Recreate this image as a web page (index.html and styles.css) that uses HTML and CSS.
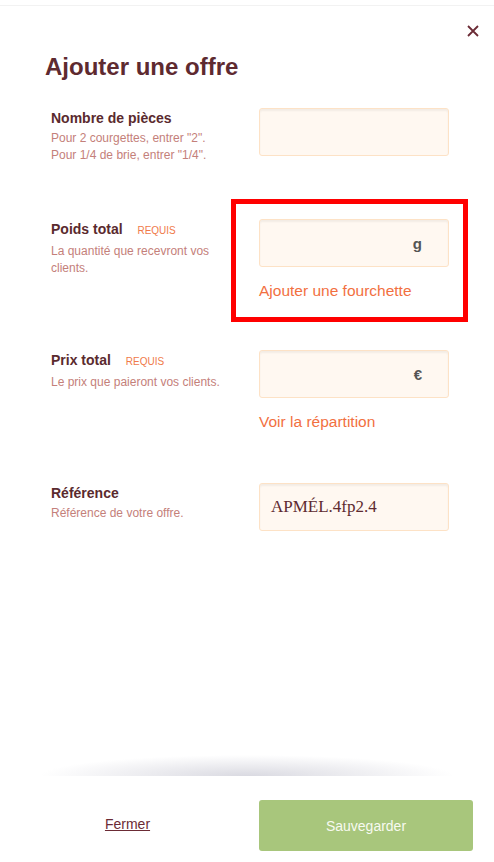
FILE: index.html
```html
<!DOCTYPE html>
<html lang="fr">
<head>
    <meta charset="UTF-8">
    <title>Ajouter une offre</title>
    <link rel="stylesheet" href="styles.css">
</head>
<body>

<div class="modal">
    <div class="content">
        <div class="topbar">
            <button class="close-btn" aria-label="Fermer">
                <svg width="12" height="12" viewBox="0 0 12 12">
                    <path d="M1 1 L11 11 M11 1 L1 11" stroke="#6b2b35" stroke-width="1.8" fill="none"/>
                </svg>
            </button>
        </div>

        <h1>Ajouter une offre</h1>

        <div class="field">
            <div class="field-info">
                <label>Nombre de pièces</label>
                <p class="help">Pour 2 courgettes, entrer "2".<br>Pour 1/4 de brie, entrer "1/4".</p>
            </div>
            <div class="field-input">
                <div class="input"></div>
            </div>
        </div>

        <div class="field">
            <div class="field-info">
                <label>Poids total <span class="required">REQUIS</span></label>
                <p class="help">La quantité que recevront vos clients.</p>
            </div>
            <div class="field-input">
                <div class="input"><span class="unit">g</span></div>
                <a class="link">Ajouter une fourchette</a>
                <div class="highlight"></div>
            </div>
        </div>

        <div class="field">
            <div class="field-info">
                <label>Prix total <span class="required">REQUIS</span></label>
                <p class="help">Le prix que paieront vos clients.</p>
            </div>
            <div class="field-input">
                <div class="input"><span class="unit">€</span></div>
                <a class="link">Voir la répartition</a>
            </div>
        </div>

        <div class="field">
            <div class="field-info">
                <label>Référence</label>
                <p class="help">Référence de votre offre.</p>
            </div>
            <div class="field-input">
                <div class="input ref">APMÉL.4fp2.4</div>
            </div>
        </div>
    </div>

    <div class="shade"></div>

    <div class="footer">
        <div class="footer-left"><a class="close-link">Fermer</a></div>
        <button class="save-btn">Sauvegarder</button>
    </div>
</div>

</body>
</html>
```

FILE: styles.css
```css
body {
    margin: 0;
    font-family: "Liberation Sans", Arial, sans-serif;
    background-color: white;
}

.modal {
    height: 862px;
    display: flex;
    flex-direction: column;
}

.content {
    flex: 1;
}

.topbar {
    margin-top: 5px;
    border-top: 1px solid #f2f2f2;
    display: flex;
    justify-content: flex-end;
    padding: 19px 15px 0;
}

.close-btn {
    background: transparent;
    border: none;
    padding: 0;
    width: 12px;
    height: 12px;
    display: block;
    cursor: pointer;
}

.close-btn svg {
    display: block;
}

h1 {
    margin: 16px 0 27px 45px;
    font-size: 24px;
    line-height: 28px;
    color: #5e2a30;
}

.field {
    display: grid;
    grid-template-columns: 208px 190px;
    padding-left: 51px;
    margin-bottom: 49px;
}

.field:last-child {
    padding-top: 2px;
}

.field-info label {
    display: block;
    font-size: 14px;
    line-height: 20px;
    font-weight: bold;
    color: #5a2a2e;
}

.required {
    font-size: 10px;
    font-weight: normal;
    color: #f07a4a;
    margin-left: 11px;
}

.help {
    margin: 2px 0 6px;
    font-size: 12px;
    line-height: 17px;
    color: #c4807a;
    padding-right: 20px;
}

.field-input {
    position: relative;
}

.input {
    height: 46px;
    border: 1px solid #fde2c6;
    border-radius: 3px;
    background-color: #fff8f1;
    box-shadow: inset 0 2px 2px rgba(0,0,0,0.05);
    display: flex;
    align-items: center;
    justify-content: flex-end;
    padding: 0 26px 0 11px;
}

.unit {
    font-size: 15px;
    font-weight: bold;
    color: #555;
}

.input.ref {
    justify-content: flex-start;
    font-family: "Liberation Serif", "DejaVu Serif", serif;
    font-size: 17px;
    color: #5e2a30;
}

.link {
    display: block;
    margin-top: 14px;
    font-size: 15.5px;
    line-height: 20px;
    color: #f2703f;
    cursor: pointer;
}

.highlight {
    position: absolute;
    left: -28px;
    top: -20px;
    width: 227px;
    height: 113px;
    border: 5px solid #ff0000;
}

.shade {
    height: 21px;
    margin: 0 40px;
    background: radial-gradient(ellipse 50% 100% at 50% 100%, rgba(205,205,215,0.75), rgba(255,255,255,0) 100%);
}

.footer {
    display: flex;
    padding: 24px 21px 11px 0;
}

.footer-left {
    width: 255px;
    margin-right: 4px;
    padding-bottom: 4px;
    display: flex;
    align-items: center;
    justify-content: center;
}

.close-link {
    font-size: 14px;
    color: #6b2b35;
    text-decoration: underline;
    cursor: pointer;
}

.save-btn {
    flex: 1;
    height: 51px;
    border: none;
    border-radius: 3px;
    background-color: #a8c67c;
    color: #f7faf0;
    font-family: "Liberation Sans", Arial, sans-serif;
    font-size: 14px;
    cursor: pointer;
}
```
